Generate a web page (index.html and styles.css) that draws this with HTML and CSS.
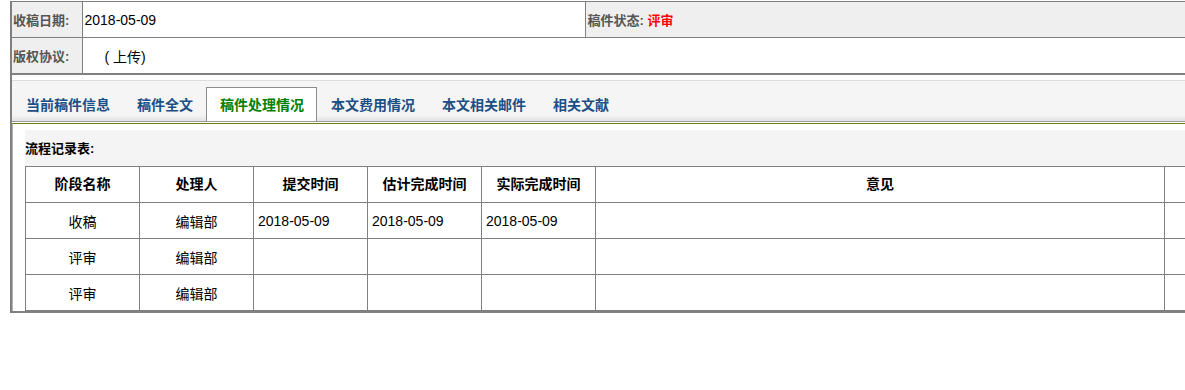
FILE: index.html
```html
<!DOCTYPE html>
<html lang="zh-CN">
<head>
    <meta charset="UTF-8">
    <title>稿件处理情况</title>
    <link rel="stylesheet" href="styles.css">
</head>
<body>
    <div class="page">
        <table class="info">
            <colgroup>
                <col class="c-label">
                <col class="c-value">
                <col>
            </colgroup>
            <tr>
                <th>收稿日期:</th>
                <td class="value">2018-05-09</td>
                <td class="status">稿件状态: <span class="red">评审</span></td>
            </tr>
            <tr>
                <th>版权协议:</th>
                <td class="value upload" colspan="2">( 上传)</td>
            </tr>
        </table>

        <div class="tabs-box">
            <ul class="tabs">
                <li>当前稿件信息</li>
                <li>稿件全文</li>
                <li class="active">稿件处理情况</li>
                <li>本文费用情况</li>
                <li>本文相关邮件</li>
                <li>相关文献</li>
            </ul>

            <div class="pane">
                <div class="pane-title">流程记录表:</div>
                <table class="flow">
                    <colgroup>
                        <col class="c-small">
                        <col class="c-small">
                        <col class="c-small">
                        <col class="c-small">
                        <col class="c-small">
                        <col class="c-wide">
                        <col>
                    </colgroup>
                    <tr>
                        <th>阶段名称</th>
                        <th>处理人</th>
                        <th>提交时间</th>
                        <th>估计完成时间</th>
                        <th>实际完成时间</th>
                        <th>意见</th>
                        <th></th>
                    </tr>
                    <tr>
                        <td class="center">收稿</td>
                        <td class="center">编辑部</td>
                        <td>2018-05-09</td>
                        <td>2018-05-09</td>
                        <td>2018-05-09</td>
                        <td></td>
                        <td></td>
                    </tr>
                    <tr>
                        <td class="center">评审</td>
                        <td class="center">编辑部</td>
                        <td></td>
                        <td></td>
                        <td></td>
                        <td></td>
                        <td></td>
                    </tr>
                    <tr>
                        <td class="center">评审</td>
                        <td class="center">编辑部</td>
                        <td></td>
                        <td></td>
                        <td></td>
                        <td></td>
                        <td></td>
                    </tr>
                </table>
            </div>
        </div>
    </div>
</body>
</html>
```

FILE: styles.css
```css
body {
    margin: 0;
    padding-top: 1px;
    background: #fff;
    color: #000;
    font-family: "Liberation Sans", "Noto Sans CJK SC", sans-serif;
    font-size: 14px;
    overflow: hidden;
}

.page {
    width: 1260px;
    margin-left: 10px;
    border-left: 2px solid #808080;
    border-bottom: 2px solid #808080;
}

/* top info table */
.info {
    width: 100%;
    border-collapse: collapse;
    table-layout: fixed;
    border-top: 1px solid #808080;
    border-bottom: 2px solid #808080;
}

.info .c-label {
    width: 70px;
}

.info .c-value {
    width: 503px;
}

.info th,
.info td {
    height: 35px;
    padding: 0 2px;
    border: 1px solid #808080;
    border-top: none;
    border-left: none;
    text-align: left;
    white-space: nowrap;
}

.info tr:last-child th,
.info tr:last-child td {
    border-bottom: none;
}

.info th {
    padding-left: 1px;
    background: #efefef;
    color: #555;
    font-size: 13px;
    font-weight: bold;
}

.info .status {
    background: #efefef;
    color: #555;
    font-size: 13px;
    font-weight: bold;
}

.red {
    color: #f00;
}

.info .upload {
    padding-left: 22px;
}

/* tabs */
.tabs-box {
    padding-top: 5px;
}

.tabs {
    display: flex;
    margin: 0;
    padding: 6px 0 0;
    list-style: none;
    border-top: 1px solid #ddd;
    border-bottom: 1px solid #9a9a9a;
    background: linear-gradient(to bottom, #f5f5f5 0, #f5f5f5 34px, #e2e2e2 40px);
}

.tabs li {
    height: 33px;
    line-height: 34px;
    padding: 0 12px 0 13px;
    border: 1px solid transparent;
    border-bottom: none;
    color: #1b4f85;
    font-size: 14px;
    font-weight: bold;
    white-space: nowrap;
}

.tabs li.active {
    background: #fff;
    border-color: #8c8c8c;
    color: #008000;
}

.pane {
    margin-top: 1px;
    padding: 6px 0 0 12px;
    border-top: 1px solid #6e7d12;
    border-left: 1px solid #b4b4b4;
}

.pane-title {
    height: 36px;
    line-height: 37px;
    background: #f4f4f4;
    color: #000;
    font-size: 13px;
    font-weight: bold;
}

/* flow table */
.flow {
    width: 100%;
    border-collapse: collapse;
    table-layout: fixed;
}

.flow .c-small {
    width: 114px;
}

.flow .c-wide {
    width: 569px;
}

.flow th,
.flow td {
    height: 35px;
    padding: 0 4px;
    border: 1px solid #808080;
    font-size: 14px;
    text-align: left;
    white-space: nowrap;
}

.flow th {
    height: 32px;
    padding-bottom: 3px;
    font-weight: bold;
    text-align: center;
}

.flow td.center {
    text-align: center;
}
```
